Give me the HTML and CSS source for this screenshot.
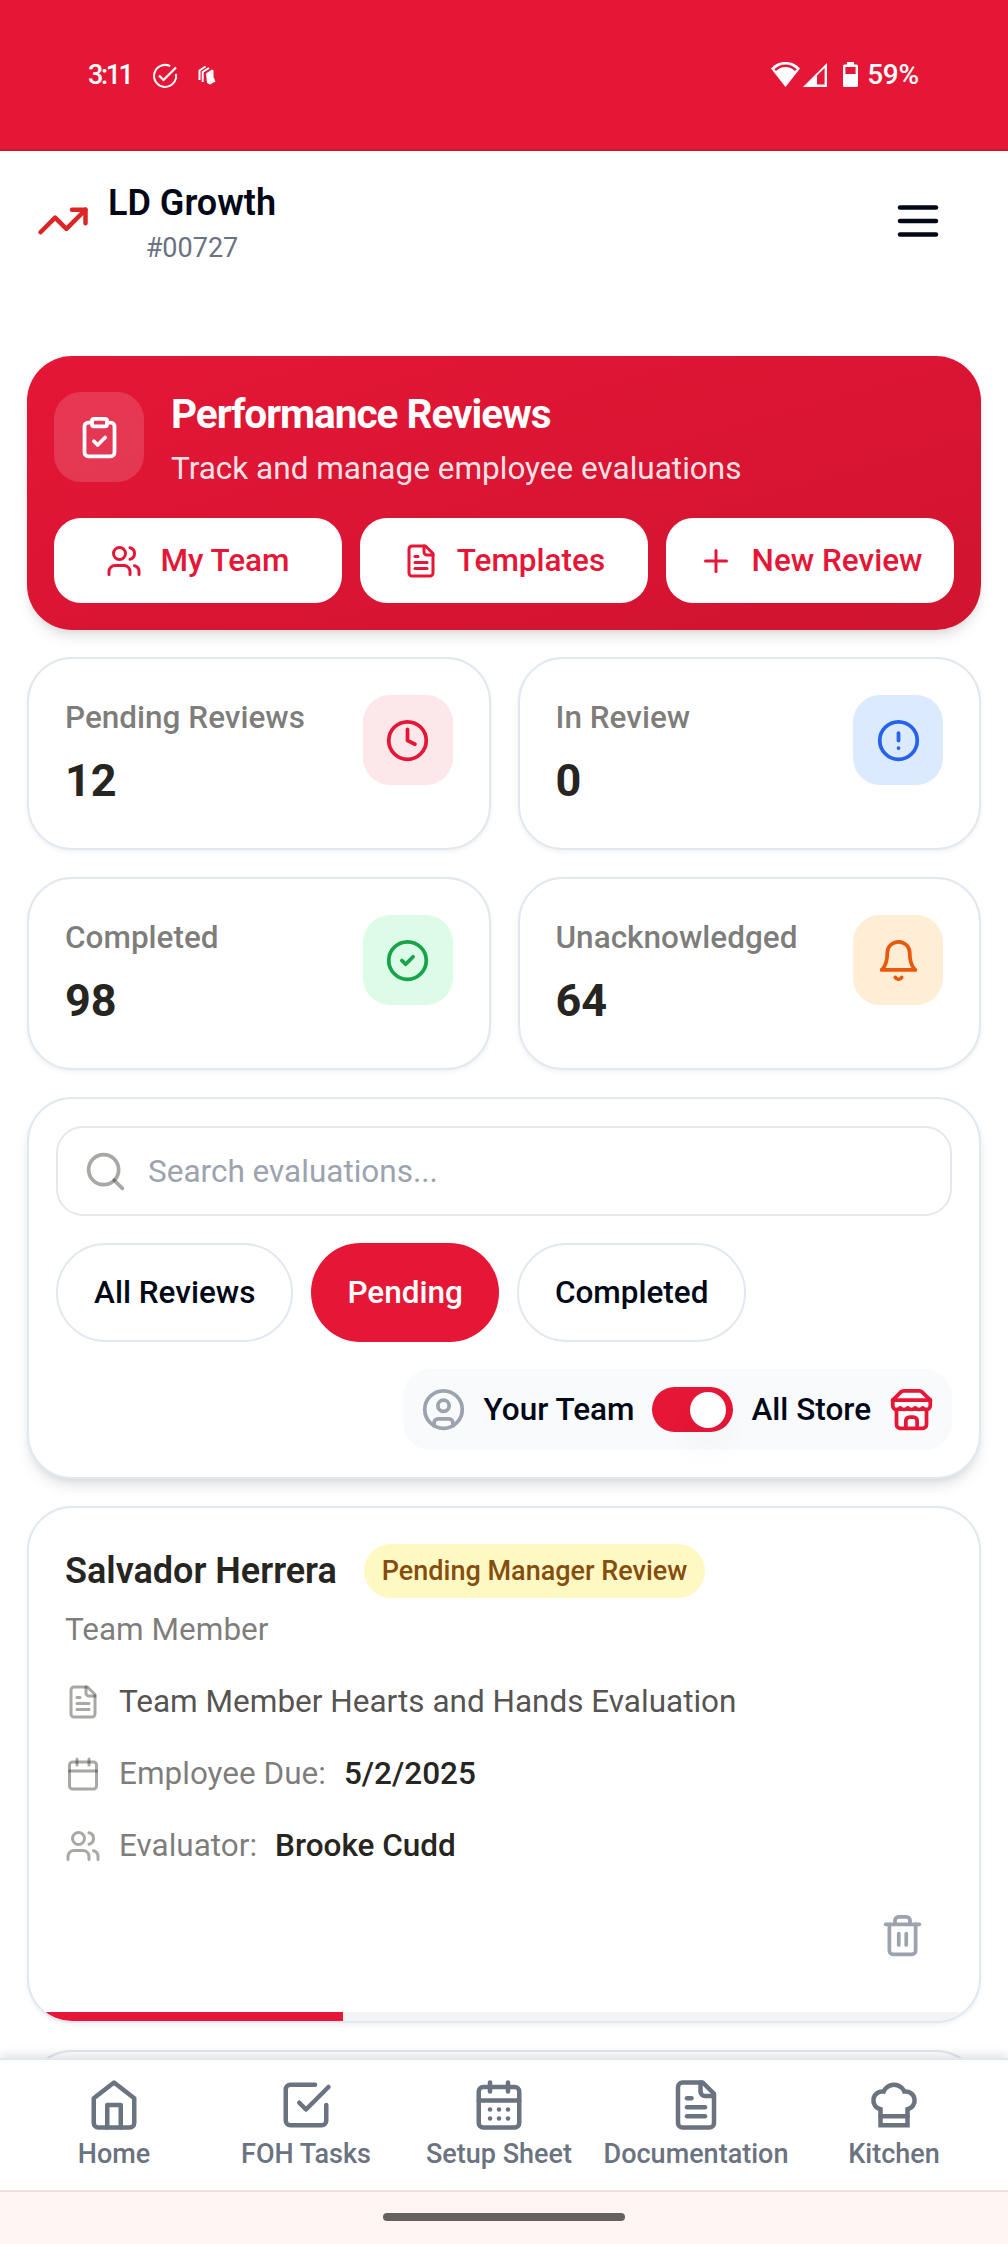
FILE: index.html
```html
<!DOCTYPE html>
<html lang="en">
<head>
<meta charset="utf-8">
<title>LD Growth – Performance Reviews</title>
<link rel="stylesheet" href="styles.css">
</head>
<body>
<svg class="sprite" xmlns="http://www.w3.org/2000/svg">
  <symbol id="trending-up" viewBox="0 0 24 24"><path d="M22 7 13.5 15.5 8.5 10.5 2 17"/><path d="M16 7h6v6"/></symbol>
  <symbol id="menu" viewBox="0 0 24 24"><path d="M4 6h16"/><path d="M4 12h16"/><path d="M4 18h16"/></symbol>
  <symbol id="clipboard-check" viewBox="0 0 24 24"><rect x="8" y="2" width="8" height="4" rx="1"/><path d="M16 4h2a2 2 0 0 1 2 2v14a2 2 0 0 1-2 2H6a2 2 0 0 1-2-2V6a2 2 0 0 1 2-2h2"/><path d="m9 14 2 2 4-4"/></symbol>
  <symbol id="users" viewBox="0 0 24 24"><path d="M16 21v-2a4 4 0 0 0-4-4H6a4 4 0 0 0-4 4v2"/><circle cx="9" cy="7" r="4"/><path d="M22 21v-2a4 4 0 0 0-3-3.87"/><path d="M16 3.13a4 4 0 0 1 0 7.75"/></symbol>
  <symbol id="file-text" viewBox="0 0 24 24"><path d="M15 2H6a2 2 0 0 0-2 2v16a2 2 0 0 0 2 2h12a2 2 0 0 0 2-2V7Z"/><path d="M14 2v4a2 2 0 0 0 2 2h4"/><path d="M10 9H8"/><path d="M16 13H8"/><path d="M16 17H8"/></symbol>
  <symbol id="plus" viewBox="0 0 24 24"><path d="M5 12h14"/><path d="M12 5v14"/></symbol>
  <symbol id="clock" viewBox="0 0 24 24"><circle cx="12" cy="12" r="10"/><path d="M12 6v6l4 2"/></symbol>
  <symbol id="alert" viewBox="0 0 24 24"><circle cx="12" cy="12" r="10"/><path d="M12 8v4"/><path d="M12 16h.01"/></symbol>
  <symbol id="check-circle" viewBox="0 0 24 24"><circle cx="12" cy="12" r="10"/><path d="m9 12 2 2 4-4"/></symbol>
  <symbol id="bell" viewBox="0 0 24 24"><path d="M6 8a6 6 0 0 1 12 0c0 7 3 9 3 9H3s3-2 3-9"/><path d="M10.3 21a1.94 1.94 0 0 0 3.4 0"/></symbol>
  <symbol id="search" viewBox="0 0 24 24"><circle cx="11" cy="11" r="8"/><path d="m21 21-4.3-4.3"/></symbol>
  <symbol id="circle-user" viewBox="0 0 24 24"><circle cx="12" cy="12" r="10"/><circle cx="12" cy="10" r="3"/><path d="M7 20.662V19a2 2 0 0 1 2-2h6a2 2 0 0 1 2 2v1.662"/></symbol>
  <symbol id="store" viewBox="0 0 24 24"><path d="m2 7 4.41-4.41A2 2 0 0 1 7.83 2h8.34a2 2 0 0 1 1.42.59L22 7"/><path d="M4 12v8a2 2 0 0 0 2 2h12a2 2 0 0 0 2-2v-8"/><path d="M15 22v-4a2 2 0 0 0-2-2h-2a2 2 0 0 0-2 2v4"/><path d="M2 7h20"/><path d="M22 7v3a2 2 0 0 1-2 2a2.7 2.7 0 0 1-1.59-.63.7.7 0 0 0-.82 0A2.7 2.7 0 0 1 16 12a2.7 2.7 0 0 1-1.59-.63.7.7 0 0 0-.82 0A2.7 2.7 0 0 1 12 12a2.7 2.7 0 0 1-1.59-.63.7.7 0 0 0-.82 0A2.7 2.7 0 0 1 8 12a2.7 2.7 0 0 1-1.59-.63.7.7 0 0 0-.82 0A2.7 2.7 0 0 1 4 12a2 2 0 0 1-2-2V7"/></symbol>
  <symbol id="calendar" viewBox="0 0 24 24"><path d="M8 2v4"/><path d="M16 2v4"/><rect x="3" y="4" width="18" height="18" rx="2"/><path d="M3 10h18"/></symbol>
  <symbol id="calendar-days" viewBox="0 0 24 24"><path d="M8 2v4"/><path d="M16 2v4"/><rect x="3" y="4" width="18" height="18" rx="2"/><path d="M3 10h18"/><path d="M8 14h.01"/><path d="M12 14h.01"/><path d="M16 14h.01"/><path d="M8 18h.01"/><path d="M12 18h.01"/><path d="M16 18h.01"/></symbol>
  <symbol id="trash" viewBox="0 0 24 24"><path d="M3 6h18"/><path d="M19 6v14a2 2 0 0 1-2 2H7a2 2 0 0 1-2-2V6"/><path d="M8 6V4a2 2 0 0 1 2-2h4a2 2 0 0 1 2 2v2"/><path d="M10 11v6"/><path d="M14 11v6"/></symbol>
  <symbol id="home" viewBox="0 0 24 24"><path d="m3 9 9-7 9 7v11a2 2 0 0 1-2 2H5a2 2 0 0 1-2-2z"/><path d="M9 22V12h6v10"/></symbol>
  <symbol id="check-square" viewBox="0 0 24 24"><path d="m9 11 3 3L22 4"/><path d="M21 12v7a2 2 0 0 1-2 2H5a2 2 0 0 1-2-2V5a2 2 0 0 1 2-2h11"/></symbol>
  <symbol id="chef-hat" viewBox="0 0 24 24"><path d="M6 13.87A4 4 0 0 1 7.41 6a5.11 5.11 0 0 1 1.05-1.54 5 5 0 0 1 7.08 0A5.11 5.11 0 0 1 16.59 6 4 4 0 0 1 18 13.87V21H6Z" stroke-linejoin="miter"/><path d="M6 17h12"/></symbol>
</svg>
<div class="app">
  <div class="status">
    <div class="status-left">
      <span class="time">3:11</span>
      <svg class="st-check" viewBox="0 0 24 24"><path d="M17.2 2.2A11 11 0 1 0 22.9 10" fill="none" stroke="#fff" stroke-width="2"/><path d="M6 11.5 10.5 16 23 3.5" fill="none" stroke="#fff" stroke-width="2.2"/></svg>
      <svg class="st-stack" viewBox="0 0 18 20"><path d="M1.5 15V5.5L7.5 1.5" fill="none" stroke="#fff" stroke-width="2" stroke-linejoin="round"/><path d="M4.7 17V7L11 3" fill="none" stroke="#fff" stroke-width="2" stroke-linejoin="round"/><path d="M8 8.5 14 4.5 15.5 5.5 15.5 12 17.5 16.5 12 19.6 9 18Z" fill="#fff"/></svg>
    </div>
    <div class="status-right">
      <svg class="st-wifi" viewBox="0 0 29 25"><path d="M14.5 0C9 0 4 2 0 6.5L14.5 25 29 6.5C25 2 20 0 14.5 0Z" fill="#fff"/><path d="M4.2 8.2C10 2.2 19 2.2 24.8 8.2" fill="none" stroke="#e51636" stroke-width="2.4"/></svg>
      <svg class="st-signal" viewBox="0 0 24 24"><path d="M24 0V24H0Z" fill="#fff"/><path d="M14 12.5 21.6 5V21.6H14Z" fill="#e51636"/></svg>
      <svg class="st-battery" viewBox="0 0 15 25"><path d="M4 0h7v2.5h2.5A1.5 1.5 0 0 1 15 4v19.5a1.5 1.5 0 0 1-1.5 1.5h-12A1.5 1.5 0 0 1 0 23.500V4a1.500 1.500 0 0 1 1.500-1.500H4Z" fill="#fff"/><path d="M2.400 5h10.200v7H2.400Z" fill="#e51636"/></svg>
      <span class="charge">59%</span>
    </div>
  </div>

  <header class="header">
    <div class="brand">
      <svg class="icon i54 logo"><use href="#trending-up"/></svg>
      <div class="brand-text">
        <div class="brand-name">LD Growth</div>
        <div class="brand-id">#00727</div>
      </div>
    </div>
    <svg class="icon i54"><use href="#menu"/></svg>
  </header>

  <main class="main">
    <section class="hero">
      <div class="hero-head">
        <div class="tile tile-glass"><svg class="icon i45"><use href="#clipboard-check"/></svg></div>
        <div>
          <h1 class="hero-title">Performance Reviews</h1>
          <p class="hero-sub">Track and manage employee evaluations</p>
        </div>
      </div>
      <div class="hero-actions">
        <div class="btn"><svg class="icon i36"><use href="#users"/></svg>My Team</div>
        <div class="btn"><svg class="icon i36"><use href="#file-text"/></svg>Templates</div>
        <div class="btn"><svg class="icon i36"><use href="#plus"/></svg>New Review</div>
      </div>
    </section>

    <section class="stats">
      <div class="card stat"><div><div class="stat-label">Pending Reviews</div><div class="stat-value">12</div></div><div class="tile tile-red"><svg class="icon i45"><use href="#clock"/></svg></div></div>
      <div class="card stat"><div><div class="stat-label">In Review</div><div class="stat-value">0</div></div><div class="tile tile-blue"><svg class="icon i45"><use href="#alert"/></svg></div></div>
      <div class="card stat"><div><div class="stat-label">Completed</div><div class="stat-value">98</div></div><div class="tile tile-green"><svg class="icon i45"><use href="#check-circle"/></svg></div></div>
      <div class="card stat"><div><div class="stat-label">Unacknowledged</div><div class="stat-value">64</div></div><div class="tile tile-orange"><svg class="icon i45"><use href="#bell"/></svg></div></div>
    </section>

    <section class="card filters">
      <div class="search"><svg class="icon i45 faint"><use href="#search"/></svg><span>Search evaluations...</span></div>
      <div class="chips">
        <div class="chip">All Reviews</div>
        <div class="chip chip-active">Pending</div>
        <div class="chip">Completed</div>
      </div>
      <div class="scope">
        <svg class="icon i45 gray"><use href="#circle-user"/></svg>
        <span>Your Team</span>
        <div class="switch"><div class="knob"></div></div>
        <span>All Store</span>
        <svg class="icon i45 red"><use href="#store"/></svg>
      </div>
    </section>

    <section class="card review">
      <div class="review-body">
        <div class="review-head"><h2 class="name">Salvador Herrera</h2><span class="badge">Pending Manager Review</span></div>
        <div class="role">Team Member</div>
        <div class="rows">
          <div class="row"><svg class="icon i36 faint"><use href="#file-text"/></svg><span class="strong">Team Member Hearts and Hands Evaluation</span></div>
          <div class="row"><svg class="icon i36 faint"><use href="#calendar"/></svg><span>Employee Due:</span><b>5/2/2025</b></div>
          <div class="row"><svg class="icon i36 faint"><use href="#users"/></svg><span>Evaluator:</span><b>Brooke Cudd</b></div>
        </div>
        <div class="review-actions"><svg class="icon i45 gray"><use href="#trash"/></svg></div>
      </div>
      <div class="progress"><div class="progress-fill" style="width:33%"></div></div>
    </section>

    <section class="card next"></section>
  </main>

  <nav class="nav">
    <div class="nav-item"><svg class="icon i54"><use href="#home"/></svg>Home</div>
    <div class="nav-item"><svg class="icon i54"><use href="#check-square"/></svg>FOH Tasks</div>
    <div class="nav-item"><svg class="icon i54"><use href="#calendar-days"/></svg>Setup Sheet</div>
    <div class="nav-item"><svg class="icon i54"><use href="#file-text"/></svg>Documentation</div>
    <div class="nav-item"><svg class="icon i54"><use href="#chef-hat"/></svg>Kitchen</div>
  </nav>
  <div class="gesture"><div class="handle"></div></div>
</div>
</body>
</html>
```
FILE: styles.css
```css
* { box-sizing: border-box; margin: 0; padding: 0; }
body {
  font-family: Roboto, "Liberation Sans", sans-serif;
  font-size: 31.5px;
  line-height: 45px;
  color: #020817;
  background: #fff;
}
.sprite { display: none; }
.app { display: flex; flex-direction: column; width: 1008px; height: 2244px; overflow: hidden; }

.icon {
  display: block; flex: none; fill: none; stroke: currentColor;
  stroke-width: 2; stroke-linecap: round; stroke-linejoin: round;
}
.i36 { width: 36px; height: 36px; }
.i45 { width: 45px; height: 45px; }
.i54 { width: 54px; height: 54px; }
.faint { color: rgba(39, 37, 31, 0.4); }
.gray { color: #9ca3af; }
.red { color: #e51636; }

/* status bar */
.status {
  flex: none; height: 151px; padding: 0 89px 0 88px;
  display: flex; justify-content: space-between; align-items: center;
  background: #e51636; border-bottom: 2px solid #cf142f; color: #fff;
}
.status-left, .status-right { display: flex; align-items: center; }
.time { width: 44px; font-size: 27px; line-height: 36px; font-weight: 500; letter-spacing: -2.4px; white-space: nowrap; }
.charge { font-size: 28px; line-height: 36px; font-weight: 500; letter-spacing: -0.2px; }
.st-check { width: 24px; height: 24px; margin-left: 21px; margin-top: 3px; overflow: visible; }
.st-stack { width: 18px; height: 20px; margin-left: 21px; margin-top: 1px; }
.st-wifi { width: 29px; height: 25px; }
.st-signal { width: 24px; height: 24px; margin-left: 3px; margin-top: 1px; }
.st-battery { width: 15px; height: 25px; margin-left: 16px; margin-right: 9px; }

/* header */
.header {
  flex: none; height: 140px; padding: 0 63px 0 36px;
  display: flex; justify-content: space-between; align-items: center;
}
.brand { display: flex; align-items: center; gap: 18px; }
.logo { color: #dc2626; }
.brand-text { text-align: center; }
.brand-name { font-size: 36px; line-height: 54px; font-weight: 600; }
.brand-id { font-size: 27px; line-height: 36px; color: #6b7280; }

.main {
  flex: 1; min-height: 0; overflow: hidden; padding: 65px 27px 0;
  display: flex; flex-direction: column; gap: 27px;
}
.main > * { flex: none; }
.card {
  background: #fff; border: 2px solid #e2e8f0; border-radius: 45px;
  box-shadow: 0 2px 5px rgba(0, 0, 0, 0.06);
}

/* hero */
.hero {
  padding: 36px 27px 27px; border-radius: 45px; color: #fff;
  background: linear-gradient(to bottom right, #e51636, #d01430);
  box-shadow: 0 9px 14px -2px rgba(0, 0, 0, 0.1), 0 4px 9px -4px rgba(0, 0, 0, 0.1);
}
.hero-head { display: flex; gap: 27px; height: 99px; margin-bottom: 27px; }
.hero-title { font-size: 40.5px; line-height: 45px; font-weight: 700; letter-spacing: -0.025em; }
.hero-sub { margin-top: 9px; color: rgba(255, 255, 255, 0.9); }
.hero-actions { display: grid; grid-template-columns: repeat(3, 1fr); gap: 18px; }
.btn {
  height: 85px; border-radius: 27px; background: #fff; color: #e51636;
  display: flex; align-items: center; justify-content: center; gap: 18px; font-weight: 500;
}
.tile {
  flex: none; width: 90px; height: 90px; border-radius: 27px;
  display: flex; align-items: center; justify-content: center;
}
.tile-glass { background: rgba(255, 255, 255, 0.15); }
.tile-red { background: #fce8eb; color: #e51636; }
.tile-blue { background: #dbeafe; color: #2563eb; }
.tile-green { background: #dcfce7; color: #16a34a; }
.tile-orange { background: #ffedd5; color: #ea580c; }

/* stats */
.stats { display: grid; grid-template-columns: 1fr 1fr; gap: 27px; }
.stat { height: 193px; padding: 36px; display: flex; justify-content: space-between; }
.stat-label { font-weight: 500; color: rgba(39, 37, 31, 0.6); }
.stat-value { margin-top: 9px; font-size: 45px; line-height: 63px; font-weight: 700; color: #27251f; }

/* filters */
.filters {
  height: 382px; padding: 27px; display: flex; flex-direction: column; gap: 27px;
  box-shadow: 0 9px 14px -2px rgba(0, 0, 0, 0.1), 0 4px 9px -4px rgba(0, 0, 0, 0.1);
}
.search {
  height: 90px; padding-left: 25px; border: 2px solid #e5e7eb; border-radius: 27px;
  display: flex; align-items: center; gap: 20px; color: #9ca3af;
}
.chips { display: flex; gap: 18px; }
.chip {
  height: 99px; padding: 0 36px; border: 2px solid #e2e8f0; border-radius: 49.5px;
  display: flex; align-items: center; font-weight: 500;
}
.chip-active { border: 0; background: #e51636; color: #fff; }
.scope {
  align-self: flex-end; height: 81px; padding: 0 18px; border-radius: 27px;
  background: #f9fafb; display: flex; align-items: center; gap: 18px; font-weight: 500;
}
.switch {
  width: 81px; height: 45px; padding-right: 7px; border-radius: 22.5px; background: #e51636;
  display: flex; align-items: center; justify-content: flex-end;
}
.knob {
  width: 36px; height: 36px; border-radius: 50%; background: #fff;
  box-shadow: 0 22px 34px -7px rgba(0, 0, 0, 0.1);
}

/* review */
.review { height: 517px; overflow: hidden; }
.review-body { height: 504px; padding: 36px; }
.review-head { display: flex; align-items: center; gap: 27px; height: 54px; }
.name { font-size: 36px; line-height: 54px; font-weight: 600; color: #27251f; }
.badge {
  height: 54px; padding: 0 18px; border-radius: 27px; background: #fef9c3; color: #854d0e;
  font-size: 27px; line-height: 54px; font-weight: 500;
}
.role { margin-top: 9px; color: rgba(39, 37, 31, 0.6); }
.rows { margin-top: 27px; display: flex; flex-direction: column; gap: 27px; color: rgba(39, 37, 31, 0.6); }
.row { display: flex; align-items: center; gap: 18px; }
.row .strong { color: rgba(39, 37, 31, 0.8); }
.row b { font-weight: 500; color: #27251f; }
.review-actions { margin-top: 27px; padding: 18px; display: flex; justify-content: flex-end; }
.progress { height: 9px; background: #f3f4f6; }
.progress-fill { height: 9px; background: #e51636; }
.next { height: 517px; }

/* bottom navigation */
.nav {
  position: relative; flex: none; height: 132px; padding: 18px 18px 0;
  border-top: 2px solid #e2e8f0; background: #fff; color: #6b7280;
  box-shadow: 0 -4px 9px rgba(0, 0, 0, 0.1);
  display: grid; grid-template-columns: 192px 192px 194px 200px 196px;
}
.nav-item { display: flex; flex-direction: column; align-items: center; gap: 4px; font-size: 27px; line-height: 36px; font-weight: 500; }
.gesture {
  position: relative; flex: none; height: 54px; padding-top: 21px;
  border-top: 2px solid #f1dedb; background: #fff6f4; display: flex; justify-content: center;
}
.handle { width: 242px; height: 8px; border-radius: 4px; background: #67625f; }
```
